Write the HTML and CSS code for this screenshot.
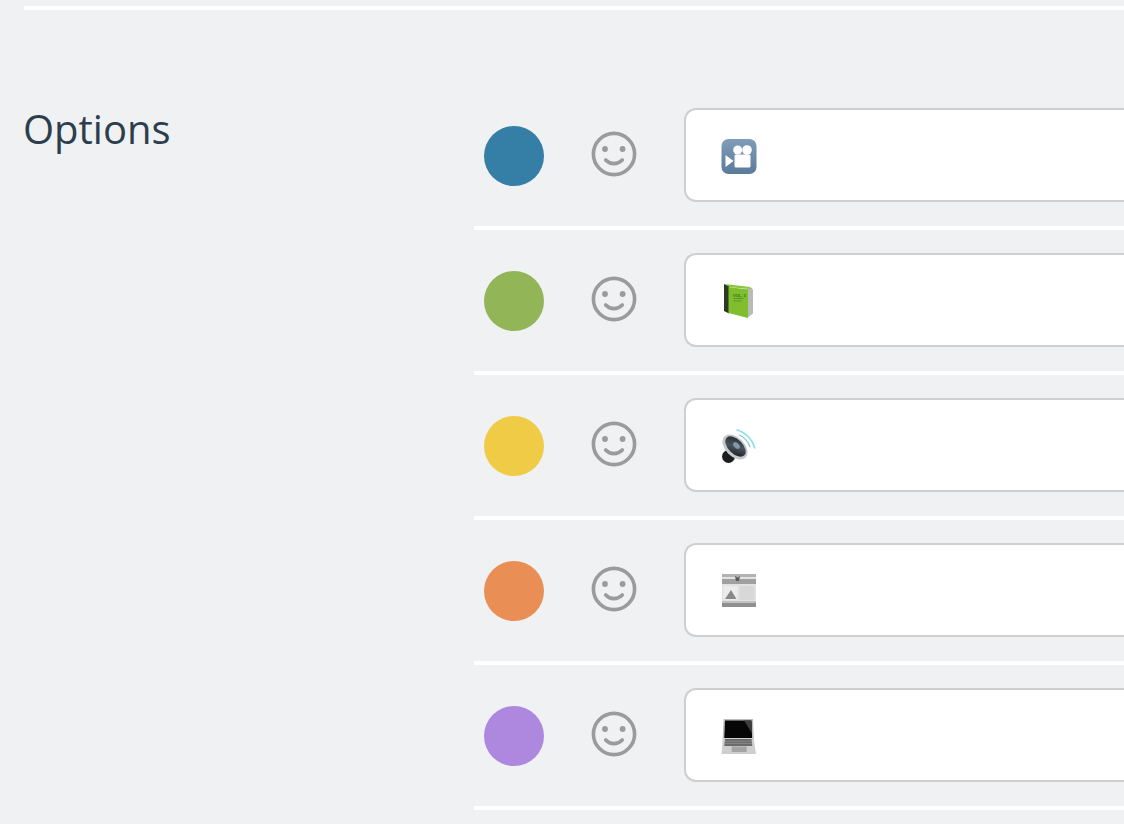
FILE: index.html
```html
<!DOCTYPE html>
<html lang="en">
<head>
<meta charset="utf-8">
<title>Options</title>
<link rel="stylesheet" href="styles.css">
</head>
<body>
<div class="top-rule"></div>
<section class="section">
  <h2 class="title">Options</h2>
  <div class="rows">
    <div class="row">
      <span class="dot dot-blue"></span>
      <svg class="smile" viewBox="0 0 46 46"><circle cx="23" cy="23" r="20.6"/><circle class="eye" cx="14" cy="18" r="2.9"/><circle class="eye" cx="31.6" cy="18" r="2.9"/><path d="M14.700 29c4.500 4.800 12 4.800 16.600 0"/></svg>
      <div class="field">
        <svg class="emoji" viewBox="0 0 36 36">
          <defs><linearGradient id="camBg" x1="0" y1="0" x2="0" y2="1"><stop offset="0" stop-color="#7f9cb8"/><stop offset="1" stop-color="#5b7b9c"/></linearGradient></defs>
          <rect x="1.500" y="2" width="35" height="35" rx="7" fill="url(#camBg)"/>
          <circle cx="17.700" cy="13" r="4.500" fill="#fff"/><circle cx="27" cy="13" r="4.800" fill="#fff"/>
          <rect x="14.500" y="17.500" width="16" height="13" rx="1.500" fill="#fff"/>
          <path d="M5.500 18l8 6-8 6z" fill="#fff"/>
        </svg>
      </div>
    </div>
    <div class="row">
      <span class="dot dot-green"></span>
      <svg class="smile" viewBox="0 0 46 46"><circle cx="23" cy="23" r="20.6"/><circle class="eye" cx="14" cy="18" r="2.9"/><circle class="eye" cx="31.6" cy="18" r="2.9"/><path d="M14.700 29c4.500 4.800 12 4.800 16.600 0"/></svg>
      <div class="field">
        <svg class="emoji" viewBox="0 0 36 36">
          <path d="M5 2l25 3 3 2.500L9 5z" fill="#8cc63f"/>
          <path d="M27 6l6 1.500v24L27 36z" fill="#b9bcb6"/>
          <path d="M4 2l5 2.500v27L4 29z" fill="#2c3a22"/>
          <path d="M8.500 5L28 7.500V36L8.500 31z" fill="#7fbf2e"/>
          <text class="vol" x="13" y="14.500">VOL. 3</text>
          <rect x="13.500" y="16" width="10" height="1" fill="#5b9426"/>
          <rect x="13.500" y="18.500" width="8" height="1" fill="#5b9426"/>
        </svg>
      </div>
    </div>
    <div class="row">
      <span class="dot dot-yellow"></span>
      <svg class="smile" viewBox="0 0 46 46"><circle cx="23" cy="23" r="20.6"/><circle class="eye" cx="14" cy="18" r="2.9"/><circle class="eye" cx="31.6" cy="18" r="2.9"/><path d="M14.700 29c4.500 4.800 12 4.800 16.600 0"/></svg>
      <div class="field">
        <svg class="emoji" viewBox="0 0 36 36">
          <defs><linearGradient id="spkCone" x1="0" y1="0" x2="1" y2="1"><stop offset="0" stop-color="#1f2226"/><stop offset=".5" stop-color="#4a545d"/><stop offset="1" stop-color="#0e1012"/></linearGradient></defs>
          <path d="M16.500 2.500c9 3 16 10 18.500 19" fill="none" stroke="#8ee0ea" stroke-width="1.600"/>
          <path d="M19 8c5 2 9 6.500 11 12" fill="none" stroke="#7cc6d2" stroke-width="1.300"/>
          <circle cx="8.500" cy="29.500" r="6.500" fill="#1b1d20"/>
          <ellipse cx="15" cy="20" rx="15" ry="9.500" transform="rotate(45 15 20)" fill="#c4c8cc"/>
          <ellipse cx="15.500" cy="19.500" rx="12.500" ry="7.200" transform="rotate(45 15.500 19.500)" fill="url(#spkCone)"/>
          <ellipse cx="16.500" cy="18.500" rx="4" ry="2.500" transform="rotate(45 16.500 18.500)" fill="#7f9aa3"/>
        </svg>
      </div>
    </div>
    <div class="row">
      <span class="dot dot-orange"></span>
      <svg class="smile" viewBox="0 0 46 46"><circle cx="23" cy="23" r="20.6"/><circle class="eye" cx="14" cy="18" r="2.9"/><circle class="eye" cx="31.6" cy="18" r="2.9"/><path d="M14.700 29c4.500 4.800 12 4.800 16.600 0"/></svg>
      <div class="field">
        <svg class="emoji" viewBox="0 0 36 36">
          <rect x="2" y="2" width="34" height="33" fill="#e2e2e2"/>
          <rect x="2" y="2" width="34" height="3" fill="#b3b3b3"/>
          <rect x="2" y="7" width="34" height="5" fill="#a0a0a0"/>
          <path d="M15 4l3 1.500L20 4l-1 5h-3z" fill="#5c5c5c"/>
          <rect x="3.500" y="14" width="14" height="14" fill="#ececec"/>
          <path d="M5 27l6-9 5.500 9z" fill="#8a8a8a"/>
          <rect x="19.500" y="14" width="15" height="14" fill="#d8d8d8"/>
          <rect x="2" y="29" width="34" height="2" fill="#c2c2c2"/>
          <rect x="2" y="31" width="34" height="4" fill="#8f8f8f"/>
        </svg>
      </div>
    </div>
    <div class="row">
      <span class="dot dot-purple"></span>
      <svg class="smile" viewBox="0 0 46 46"><circle cx="23" cy="23" r="20.6"/><circle class="eye" cx="14" cy="18" r="2.9"/><circle class="eye" cx="31.6" cy="18" r="2.9"/><path d="M14.700 29c4.500 4.800 12 4.800 16.600 0"/></svg>
      <div class="field">
        <svg class="emoji" viewBox="0 0 36 36">
          <path d="M3.500 2h29.500l.800 20H2.700z" fill="#bdbdbd"/>
          <path d="M5 3.500h26.500l.600 17.500H4.300z" fill="#060606"/>
          <path d="M24 3.500h7.500l.600 13z" fill="#3d3d3d"/>
          <path d="M2.700 21h31l2.300 16H1.500z" fill="#cfcfcf"/>
          <path d="M5 22h26.500l.800 7H4.300z" fill="#6a6a6a"/>
          <path d="M5 24.200h27M4.700 26.400h27.500" stroke="#9a9a9a" stroke-width=".6"/>
          <rect x="11.700" y="29.500" width="15" height="5.500" fill="#a4a4a4"/>
        </svg>
      </div>
    </div>
  </div>
</section>
</body>
</html>
```
FILE: styles.css
```css
html, body {
  margin: 0;
  padding: 0;
  height: 100%;
  overflow: hidden;
  background: #eff1f3;
}
.top-rule {
  height: 4px;
  margin: 6px 0 0 24px;
  background: #fff;
}
.section {
  display: flex;
  padding-top: 98px;
}
.title {
  flex: 0 0 451px;
  margin: -1px 0 0 23px;
  font-family: "Open Sans", sans-serif;
  font-size: 40px;
  font-weight: 400;
  line-height: 44px;
  color: #2c3e4c;
}
.rows {
  flex: 1 0 650px;
  display: flex;
  flex-direction: column;
}
.row {
  display: flex;
  align-items: center;
  padding: 0 0 24px 10px;
  margin-bottom: 23px;
  border-bottom: 4px solid #fff;
}
.dot {
  flex: none;
  width: 60px;
  height: 60px;
  margin-top: 1px;
  border-radius: 50%;
}
.dot-blue { background: #357fa6; }
.dot-green { background: #92b558; }
.dot-yellow { background: #f0cb45; }
.dot-orange { background: #e98f56; }
.dot-purple { background: #ae88de; }
.smile {
  flex: none;
  width: 46px;
  height: 46px;
  margin: 0 47px 2px 47px;
  fill: none;
  stroke: #9b9b9b;
  stroke-width: 3.600;
  stroke-linecap: round;
}
.smile .eye {
  fill: #9b9b9b;
  stroke: none;
}
.field {
  flex: 1;
  box-sizing: border-box;
  display: flex;
  align-items: center;
  height: 94px;
  padding-left: 34px;
  background: #fff;
  border: 2px solid #cfcfcf;
  border-right: 0;
  border-radius: 12px 0 0 12px;
}
.emoji {
  flex: none;
  width: 36px;
  height: 36px;
  overflow: visible;
}
.vol {
  font-family: "Liberation Sans", sans-serif;
  font-size: 4px;
  font-weight: 700;
  fill: #3c6a14;
}
```
